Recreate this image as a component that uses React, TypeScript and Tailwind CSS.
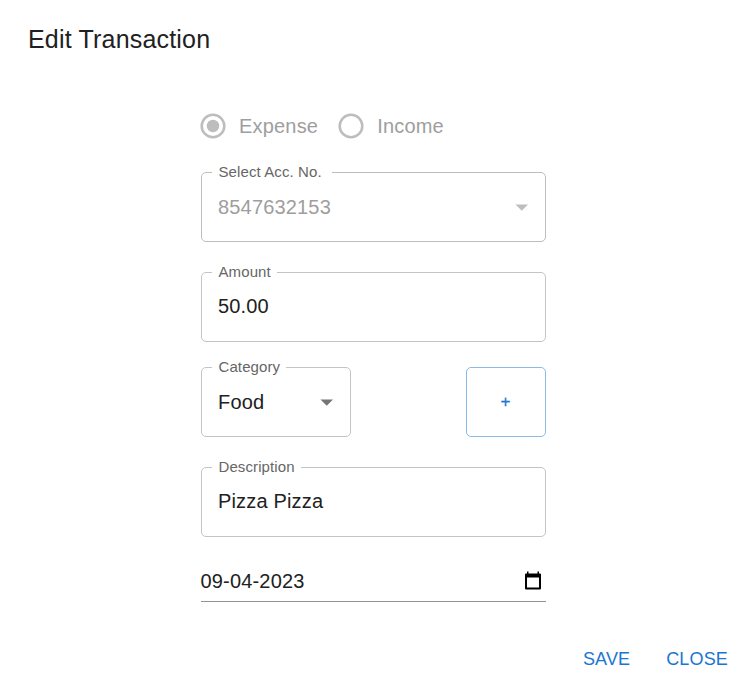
import React from "react";

interface OutlinedProps {
  label: string;
  value: string;
  disabled?: boolean;
  arrow?: boolean;
  className: string;
  legendClass?: string;
}

function Outlined({ label, value, disabled, arrow, className, legendClass = "pr-[6px]" }: OutlinedProps) {
  return (
    <fieldset className={`h-[76px] rounded-[5px] border px-[10px] ${disabled ? "border-[#bdbdbd]" : "border-[#c4c4c4]"} ${className}`}>
      <legend className={`h-[13px] pl-[6.5px] text-[15px] leading-[11px] tracking-[0.1px] whitespace-nowrap text-[#666666] ${legendClass}`}>{label}</legend>
      <div className={`flex items-center justify-between px-[6px] ${arrow ? "h-[56px]" : "h-[54px]"}`}>
        <span className={`text-[20px] leading-[28px] tracking-[0.17px] ${disabled ? "text-[#9e9e9e]" : "text-[#212121]"}`}>{value}</span>
        {arrow && (
          <svg width="14" height="7" viewBox="0 0 14 7" className={disabled ? "text-[#bdbdbd]" : "text-[#757575]"}>
            <path d="M0.5 0.5h12.5L6.75 6.75z" fill="currentColor" />
          </svg>
        )}
      </div>
    </fieldset>
  );
}

function RadioOption({ label, checked }: { label: string; checked?: boolean }) {
  return (
    <div className="flex items-center gap-[13px]">
      <svg width="26" height="26" viewBox="0 0 26 26" fill="none">
        <circle cx="13" cy="13" r="11.3" stroke="#bdbdbd" strokeWidth="2.5" />
        {checked && <circle cx="13" cy="13" r="6.25" fill="#bdbdbd" />}
      </svg>
      <span className="text-[20px] leading-[30px] tracking-[0.19px] text-[#9e9e9e]">{label}</span>
    </div>
  );
}

export default function App() {
  return (
    <main className="flex h-[690px] w-[746px] flex-col bg-white font-['Liberation_Sans',Arial,sans-serif]">
      <h1 className="pt-[19px] pl-[28px] text-[25px] leading-[40px] tracking-[0.19px] text-[#212121]">Edit Transaction</h1>
      <form className="ml-[201px] mt-[52px] w-[345px]">
        <div className="-ml-[1px] flex h-[30px] items-center gap-[20px]">
          <RadioOption label="Expense" checked />
          <RadioOption label="Income" />
        </div>
        <Outlined label="Select Acc. No." value="8547632153" disabled arrow className="mt-[25px] w-[345px]" legendClass="pr-[10px]" />
        <Outlined label="Amount" value="50.00" className="mt-[24px] w-[345px]" />
        <div className="mt-[19px] flex items-end justify-between">
          <Outlined label="Category" value="Food" arrow className="w-[150px]" />
          <button type="button" className="h-[70px] w-[80px] rounded-[5px] border border-[#8cbae8] pr-[1px] text-[17px] text-[#1976d2] [-webkit-text-stroke:0.3px_#1976d2]">+</button>
        </div>
        <Outlined label="Description" value="Pizza Pizza" className="mt-[24px] w-[345px]" />
        <div className="mt-[24px] flex h-[41px] items-center justify-between border-b border-[#949494] pr-[3px]">
          <span className="-ml-[0.5px] text-[20px] leading-[28px] tracking-[0.17px] text-[#212121]">09-04-2023</span>
          <svg width="20" height="20" viewBox="0 0 20 20">
            <path fillRule="evenodd" d="M4 0.5h1.5v2h9v-2H16v2h1q1 0 1 1V17.5q0 1-1 1H3q-1 0-1-1V3.5q0-1 1-1h1zM4 6.5v10h12v-10z" fill="#000" />
          </svg>
        </div>
      </form>
      <footer className="mt-[42px] flex justify-end gap-[36px] pr-[18px] text-[18px] leading-[30px] tracking-[0.15px] text-[#1976d2]">
        <button type="button">SAVE</button>
        <button type="button">CLOSE</button>
      </footer>
    </main>
  );
}
